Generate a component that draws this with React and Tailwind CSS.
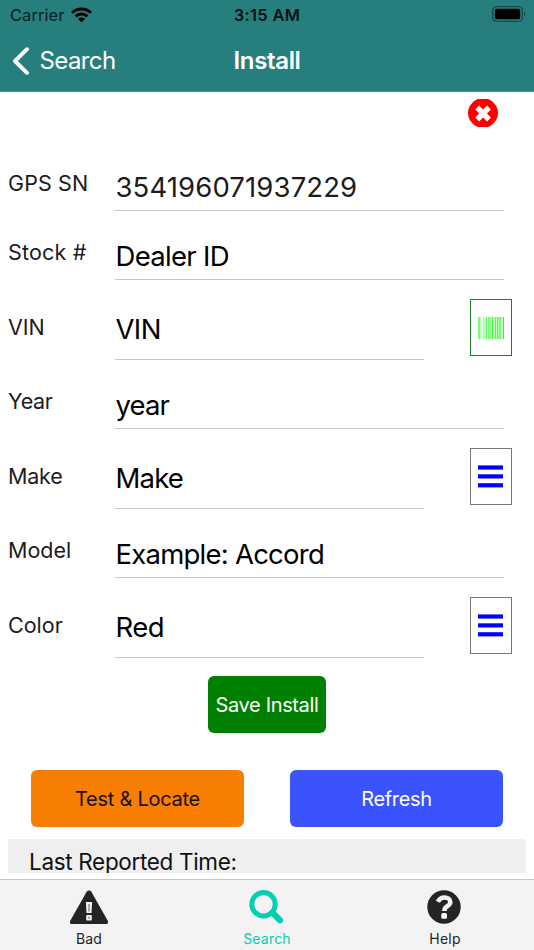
import { useState } from 'react';
import clsx from 'clsx';

const FIELDS = [
    { name: 'sn', label: 'GPS SN', value: '354196071937229', muted: true, labelSpacing: 'tracking-[0.1px]', valueSpacing: 'tracking-[0.12px]' },
    { name: 'stock', label: 'Stock #', value: 'Dealer ID', labelSpacing: 'tracking-[0.2px]', valueSpacing: 'tracking-[-0.7px]' },
    { name: 'vin', label: 'VIN', value: 'VIN', action: 'scan', labelSpacing: 'tracking-[0px]', valueSpacing: 'tracking-[-0.6px]' },
    { name: 'year', label: 'Year', value: 'year', labelSpacing: 'tracking-[-0.3px]', valueSpacing: 'tracking-[-0.9px]' },
    { name: 'make', label: 'Make', value: 'Make', action: 'list', labelSpacing: 'tracking-[-0.2px]', valueSpacing: 'tracking-[-0.8px]' },
    { name: 'model', label: 'Model', value: 'Example: Accord', labelSpacing: 'tracking-[0px]', valueSpacing: 'tracking-[-0.76px]' },
    { name: 'color', label: 'Color', value: 'Red', action: 'list', labelSpacing: 'tracking-[0px]', valueSpacing: 'tracking-[-0.6px]' },
];

const WifiIcon = () => (
    <svg width="21" height="16" viewBox="0 0 21 16" fill="none" stroke="#000" strokeWidth="2.9">
        <path d="M1 5.8C6.2.7 14.8.7 20 5.8" />
        <path d="M4.6 9.4c3.3-3.2 8.5-3.2 11.8 0" />
        <path d="M10.5 15.3 7 11.9c1.9-1.8 5.1-1.8 7 0z" fill="#000" stroke="none" />
    </svg>
);

const BatteryIcon = () => (
    <svg width="34" height="16" viewBox="0 0 34 16">
        <rect x="0.7" y="0.7" width="29.6" height="14.6" rx="3.6" fill="none" stroke="#124c4b" strokeWidth="1.3" />
        <rect x="2.8" y="2.8" width="25.4" height="10.4" rx="1.6" fill="#000" />
        <path d="M32 5.8c1.8.6 1.8 3.8 0 4.4z" fill="#124c4b" />
    </svg>
);

const CloseIcon = () => (
    <svg width="30" height="28" viewBox="0 0 30 28">
        <path d="M10 0h10c6 2.4 10 8 10 14s-4 11.6-10 14H10C4 25.6 0 20 0 14S4 2.4 10 0z" fill="#f00" />
        <path d="m9.2 8.500 11.800 12M21 8.500l-11.800 12" stroke="#fff" strokeWidth="5.4" />
    </svg>
);

// x offset, width and opacity of each bar
const BARS = [
    [0, 2, 0.6], [2, 1, 0.3], [3, 1, 0.15], [5, 3, 0.3], [8, 1, 0.7], [10, 1, 0.65], [11, 2, 0.5],
    [14, 1, 0.9], [15, 1, 0.3], [16, 1, 0.2], [17, 1, 0.75], [18, 1, 0.3], [19, 1, 0.7], [20, 1, 0.4], [21, 2, 0.6], [23, 1, 0.3], [24, 1, 0.25], [25, 1, 0.9],
];

const BarcodeIcon = () => (
    <svg width="26" height="22" viewBox="0 0 26 22" fill="#1dfb1d">
        {BARS.map(([x, w, opacity]) => <rect key={x} x={x} y="0" width={w} height="22" opacity={opacity} />)}
    </svg>
);

const ListIcon = () => (
    <svg width="25" height="23" viewBox="0 0 25 23" fill="#00f">
        <rect y="0.4" width="25" height="4.2" />
        <rect y="9.3" width="25" height="4.2" />
        <rect y="18.2" width="25" height="4.2" />
    </svg>
);

const FieldRow = ({ field, value, onChange }) => {
    const tall = Boolean(field.action);
    return (
        <div className={clsx('flex', tall ? 'h-20' : 'h-[69px]')}>
            <label htmlFor={field.name} className={clsx('w-[115px] shrink-0 pl-2 text-[21.5px] leading-7 text-[#1c1c1c]', tall ? 'pt-[33px]' : 'pt-[27.4px]', field.labelSpacing)}>
                {field.label}
            </label>
            <input
                id={field.name}
                value={value}
                onChange={onChange}
                className={clsx(
                    'min-w-0 shrink-0 border-b border-[#c6c6c6] pl-[0.5px] text-[27.5px] outline-none',
                    tall ? 'w-[309px] pt-[21px]' : 'w-[389px] pt-[23px]',
                    field.muted ? 'text-[#1c1c1c]' : 'text-black',
                    field.valueSpacing
                )}
            />
            {tall && (
                <button className={clsx('mt-[19px] ml-[46px] flex h-[57px] w-[42px] shrink-0 items-center border pl-[7px]', field.action === 'scan' ? 'border-[#228022]' : 'border-[#777]')}>
                    {field.action === 'scan' ? <BarcodeIcon /> : <ListIcon />}
                </button>
            )}
        </div>
    );
};

const BadIcon = () => (
    <svg width="38" height="34" viewBox="0 0 38 34">
        <path d="M16.8 1.5C18 0 20 0 21.2 1.5L37.6 30.5c1 1.8.2 3.5-1.8 3.5H2.2C.2 34-.6 32.3.4 30.5z" fill="#242424" />
        <path d="M15.9 12h6.200l-.6 11h-5z" fill="#f3f3f3" />
        <rect x="16.2" y="25" width="5.6" height="5.5" rx="1" fill="#f3f3f3" />
        <path d="M19 14v7.500M19 26.500v2.500" stroke="#8a8a8a" strokeWidth="1.400" />
    </svg>
);

const SearchIcon = () => (
    <svg className="-ml-[2px]" width="35" height="34" viewBox="0 0 35 34" fill="none" stroke="#06ceaf">
        <circle cx="14.5" cy="14.2" r="11.7" strokeWidth="5" />
        <path d="M23.5 22.800 31 30.300" strokeWidth="6.2" strokeLinecap="round" />
    </svg>
);

const HelpIcon = () => (
    <svg className="-ml-[2px]" width="34" height="34" viewBox="0 0 34 34">
        <circle cx="17" cy="17" r="16.7" fill="#242424" />
        <path d="M10.8 11.8c1.5-3 3.6-4.3 6.5-4.3 3.7 0 6 2.1 6 4.7 0 4-5.8 4-5.8 7.9v.8" fill="none" stroke="#f3f3f3" strokeWidth="4.6" />
        <rect x="14.3" y="23" width="5.7" height="5.7" rx="1.5" fill="#f3f3f3" />
    </svg>
);

const TABS = [
    { name: 'Bad', Icon: BadIcon },
    { name: 'Search', Icon: SearchIcon },
    { name: 'Help', Icon: HelpIcon },
];

const App = () => {
    const [values, setValues] = useState(Object.fromEntries(FIELDS.map((f) => [f.name, f.value])));
    const [tab, setTab] = useState('Search');

    return (
        <div className="flex h-[950px] w-[534px] flex-col overflow-hidden bg-white font-['Inter',sans-serif]">
            {/* Status bar and title */}
            <header className="h-[92px] shrink-0 border-b border-[#4a9391] bg-[#277f7d]">
                <div className="grid h-[30px] grid-cols-3 items-center px-[10px] text-[16.5px] text-black">
                    <div className="flex items-center gap-[7px]">
                        <span className="tracking-[0.05px] text-[#06201f]">Carrier</span>
                        <WifiIcon />
                    </div>
                    <div className="text-center font-semibold tracking-[0.25px] text-[#031413]">3:15 AM</div>
                    <div className="-mr-[2px] flex justify-end pb-[2px]"><BatteryIcon /></div>
                </div>
                <div className="grid h-[61px] grid-cols-3 items-center text-2xl text-white">
                    <button className="flex items-center gap-[10.5px] pl-3 tracking-[-0.6px]">
                        <svg width="17" height="28" viewBox="0 0 17 28" fill="none" stroke="#fff" strokeWidth="3.9" strokeLinecap="round" strokeLinejoin="round">
                            <path d="M15 2.200 3 14l12 11.800" />
                        </svg>
                        Search
                    </button>
                    <h1 className="text-center font-semibold tracking-[-0.35px]">Install</h1>
                </div>
            </header>

            <main className="flex h-[787px] shrink-0 flex-col overflow-hidden">
                <div className="flex h-[50px] shrink-0 justify-end pt-[7px] pr-9">
                    <button className="h-7"><CloseIcon /></button>
                </div>

                {FIELDS.map((field) => (
                    <FieldRow
                        key={field.name}
                        field={field}
                        value={values[field.name]}
                        onChange={(e) => setValues({ ...values, [field.name]: e.target.value })}
                    />
                ))}

                <button className="mx-auto mt-[18.4px] h-[57px] w-[118px] shrink-0 rounded-md bg-[#008000] text-xl tracking-[-0.35px] whitespace-nowrap text-white">Save Install</button>

                <div className="mt-[37px] flex shrink-0 justify-between px-[31px]">
                    <button className="h-[57px] w-[213px] rounded-md bg-[#f77e00] text-xl tracking-[-0.26px] text-[#190d00]">Test &amp; Locate</button>
                    <button className="h-[57px] w-[213px] rounded-md bg-[#3b53ff] text-xl tracking-[-0.35px] text-white">Refresh</button>
                </div>

                <div className="mx-2 mt-[11.6px] h-[34px] shrink-0 overflow-hidden bg-[#efefef] pt-2 pl-[21px] text-[22.5px] leading-[30px] tracking-[-0.33px] text-[#111]">
                    Last Reported Time:
                </div>
            </main>

            <nav className="grid h-[71px] shrink-0 grid-cols-3 border-t border-[#c6c6c6] bg-[#f3f3f3]">
                {TABS.map(({ name, Icon }) => (
                    <button key={name} onClick={() => setTab(name)} className={clsx('flex flex-col items-center pt-[10px] text-sm', tab === name ? 'text-[#06ceaf]' : 'text-[#242424]')}>
                        <Icon />
                        <span className="mt-[5px] leading-5 tracking-[0.2px]">{name}</span>
                    </button>
                ))}
            </nav>
        </div>
    );
};

export default App;
